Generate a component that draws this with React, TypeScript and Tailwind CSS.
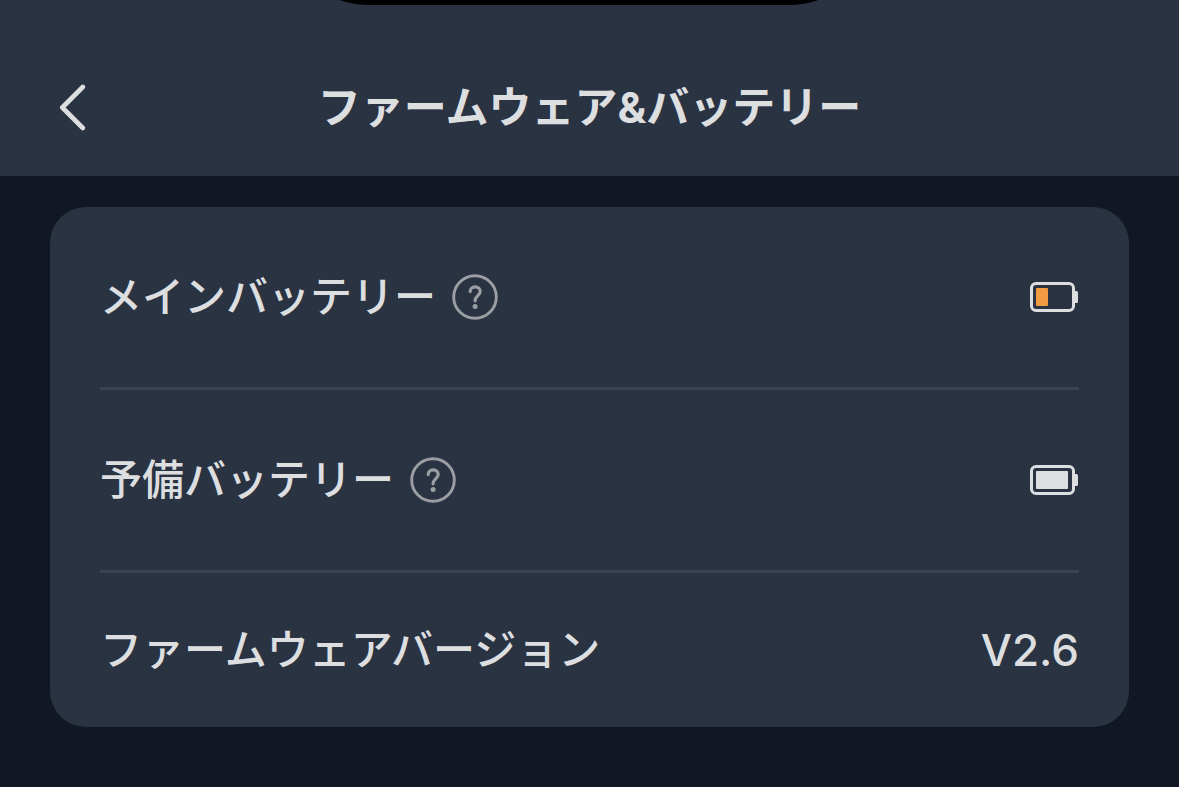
import type { ReactNode } from 'react'

const font = "font-['Inter','Noto_Sans_CJK_JP',sans-serif]"

function HelpButton({ label }: { label: string }) {
    return (
        <button type="button" aria-label={label} className="shrink-0 text-[#9b9ea2]">
            <svg className="block size-[46px]" viewBox="0 0 46 46" fill="none" stroke="currentColor" aria-hidden="true">
                <circle cx="23" cy="23" r="21.3" strokeWidth="2.9" />
                <path
                    d="M18.2 17.6c0-3 2.1-4.8 5-4.8s5 1.8 5 4.7c0 4.1-5.1 4.3-5.1 9.3"
                    strokeWidth="3.2"
                    strokeLinecap="round"
                />
                <circle cx="23.1" cy="32.4" r="2.5" fill="currentColor" stroke="none" />
            </svg>
        </button>
    )
}

function BatteryIcon({ low, label }: { low?: boolean; label: string }) {
    return (
        <svg className="block h-[30px] w-[49px] shrink-0" viewBox="0 0 49 30" role="img" aria-label={label}>
            <rect x="1.5" y="1.5" width="42" height="27" rx="4.5" fill="none" stroke="#dcdee0" strokeWidth="3" />
            <path d="M44 9h2.5a1.5 1.5 0 0 1 1.5 1.5v9a1.5 1.5 0 0 1-1.5 1.5H44z" fill="#dcdee0" />
            {low ? (
                <rect x="6" y="6" width="12" height="18" rx="1" fill="#f19a41" />
            ) : (
                <rect x="6" y="6" width="32" height="18" rx="1" fill="#dcdee0" />
            )}
        </svg>
    )
}

function Row({ title, help, children }: { title: string; help?: boolean; children: ReactNode }) {
    return (
        <li className={`flex items-center justify-between ${help ? 'h-[183px] border-b-3 border-[#3b4350]' : 'h-[154px]'}`}>
            <div className="flex items-center gap-4">
                <span className="text-[42px] leading-[60px] font-medium">{title}</span>
                {help && <HelpButton label={`${title}について`} />}
            </div>
            {children}
        </li>
    )
}

export default function App() {
    return (
        <div lang="ja" className={`min-h-screen bg-[#121823] text-[#dcdee0] ${font}`}>
            {/* Header */}
            <header className="relative bg-[#2a3341] px-[50px] pt-[38px]">
                <svg
                    className="absolute top-0 left-1/2 -ml-[250px] h-[5px] w-[478px]"
                    viewBox="0 0 478 5"
                    aria-hidden="true"
                >
                    <path d="M0 0C9 3.5 18 5 32 5H446C460 5 469 3.5 478 0Z" fill="#000" />
                </svg>
                <div className="grid h-[138px] grid-cols-[46px_1fr_46px] items-center">
                    <button type="button" aria-label="戻る" className="flex justify-center">
                        <svg className="h-12 w-[30px]" viewBox="0 0 30 48" fill="none" aria-hidden="true">
                            <path
                                d="M24.8 4L4.3 24.5L24.8 45"
                                stroke="currentColor"
                                strokeWidth="4.6"
                                strokeLinecap="round"
                                strokeLinejoin="round"
                            />
                        </svg>
                    </button>
                    <h1 className="text-center text-[43px] leading-[60px] font-bold">ファームウェア&amp;バッテリー</h1>
                </div>
            </header>

            {/* Battery and firmware list */}
            <main className="px-[50px] py-[31px]">
                <ul className="rounded-[36px] bg-[#2a3341] px-[50px]">
                    <Row title="メインバッテリー" help>
                        <BatteryIcon low label="残量低下" />
                    </Row>
                    <Row title="予備バッテリー" help>
                        <BatteryIcon label="満充電" />
                    </Row>
                    <Row title="ファームウェアバージョン">
                        <span className="text-[44px] leading-[60px] font-medium">V2.6</span>
                    </Row>
                </ul>
            </main>
        </div>
    )
}
